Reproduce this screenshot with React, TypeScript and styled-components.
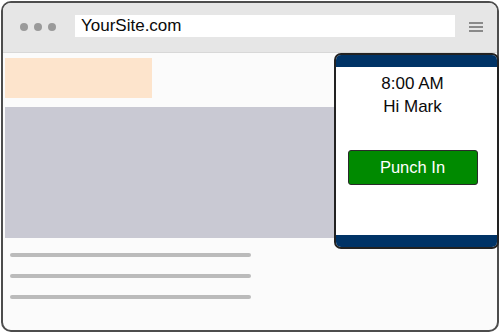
import React from "react";
import styled, { createGlobalStyle } from "styled-components";

const GlobalStyle = createGlobalStyle`
    body {
        margin: 0;
        background: #ffffff;
        font-family: "Liberation Sans", Arial, sans-serif;
    }
`;

const textLines = [1, 2, 3];

const App = () => {
    return (
        <>
            <GlobalStyle />
            <Frame>
                <Toolbar>
                    <Dots>
                        <Dot />
                        <Dot />
                        <Dot />
                    </Dots>
                    <AddressBar>YourSite.com</AddressBar>
                    <Burger>
                        <span />
                        <span />
                        <span />
                    </Burger>
                </Toolbar>
                <Content>
                    <Banner />
                    <Hero />
                    <Lines>
                        {textLines.map((n) => (
                            <TextLine key={n} />
                        ))}
                    </Lines>
                    <Widget>
                        <Cap />
                        <WidgetBody>
                            <Greeting>8:00 AM</Greeting>
                            <Greeting>Hi Mark</Greeting>
                            <PunchButton>Punch In</PunchButton>
                        </WidgetBody>
                        <Cap />
                    </Widget>
                </Content>
            </Frame>
        </>
    );
};

export default App;

const Frame = styled.div`
    position: relative;
    margin: 1px 0 0 1px;
    width: 494px;
    height: 327px;
    border: 2px solid #4d4d4d;
    border-radius: 10px;
    background: #fbfbfb;
    display: flex;
    flex-direction: column;
`;

const Toolbar = styled.div`
    height: 49px;
    flex-shrink: 0;
    display: flex;
    align-items: center;
    background: #e6e6e6;
    border-bottom: 1px solid #d8d8d8;
    border-radius: 8px 8px 0 0;
    padding: 0 0 0 17px;
`;

const Dots = styled.div`
    display: flex;
    gap: 6px;
    margin-top: -1px;
`;

const Dot = styled.span`
    width: 8px;
    height: 8px;
    border-radius: 50%;
    background: #9a9a9a;
`;

const AddressBar = styled.div`
    margin-left: 19px;
    width: 374px;
    height: 22px;
    background: #ffffff;
    padding-left: 6px;
    font-size: 17px;
    line-height: 22px;
    color: #0a0a0a;
    margin-top: -4px;
`;

const Burger = styled.div`
    margin-left: 14px;
    width: 14px;
    display: flex;
    flex-direction: column;
    gap: 2px;
    margin-top: -2px;

    span {
        height: 2px;
        background: #8a8a8a;
    }
`;

const Content = styled.div`
    position: relative;
    flex: 1;
    padding: 5px 0 0 2px;
    display: flex;
    flex-direction: column;
`;

const Banner = styled.div`
    width: 147px;
    height: 40px;
    background: #fde4cc;
`;

const Hero = styled.div`
    margin-top: 9px;
    height: 131px;
    background: #c9c9d3;
`;

const Lines = styled.div`
    margin: 15px 0 0 5px;
    display: flex;
    flex-direction: column;
    gap: 17px;
`;

const TextLine = styled.div`
    width: 241px;
    height: 4px;
    border-radius: 2px;
    background: #bbbbbb;
`;

const Widget = styled.div`
    position: absolute;
    top: 0;
    right: -2px;
    width: 161px;
    height: 192px;
    border: 2px solid #222222;
    border-radius: 7px;
    background: #ffffff;
    display: flex;
    flex-direction: column;
    overflow: hidden;
`;

const Cap = styled.div`
    height: 12px;
    flex-shrink: 0;
    background: #003366;
`;

const WidgetBody = styled.div`
    flex: 1;
    display: flex;
    flex-direction: column;
    align-items: center;
    padding: 5px 8px 0 0;
`;

const Greeting = styled.div`
    font-size: 17px;
    line-height: 23px;
    color: #0a0a0a;
`;

const PunchButton = styled.button`
    margin-top: 32px;
    width: 130px;
    height: 35px;
    background: #008a00;
    border: 1px solid #2a2a2a;
    border-radius: 3px;
    color: #ffffff;
    font-family: "Liberation Sans", Arial, sans-serif;
    font-size: 16.5px;
    padding: 0;
`;
